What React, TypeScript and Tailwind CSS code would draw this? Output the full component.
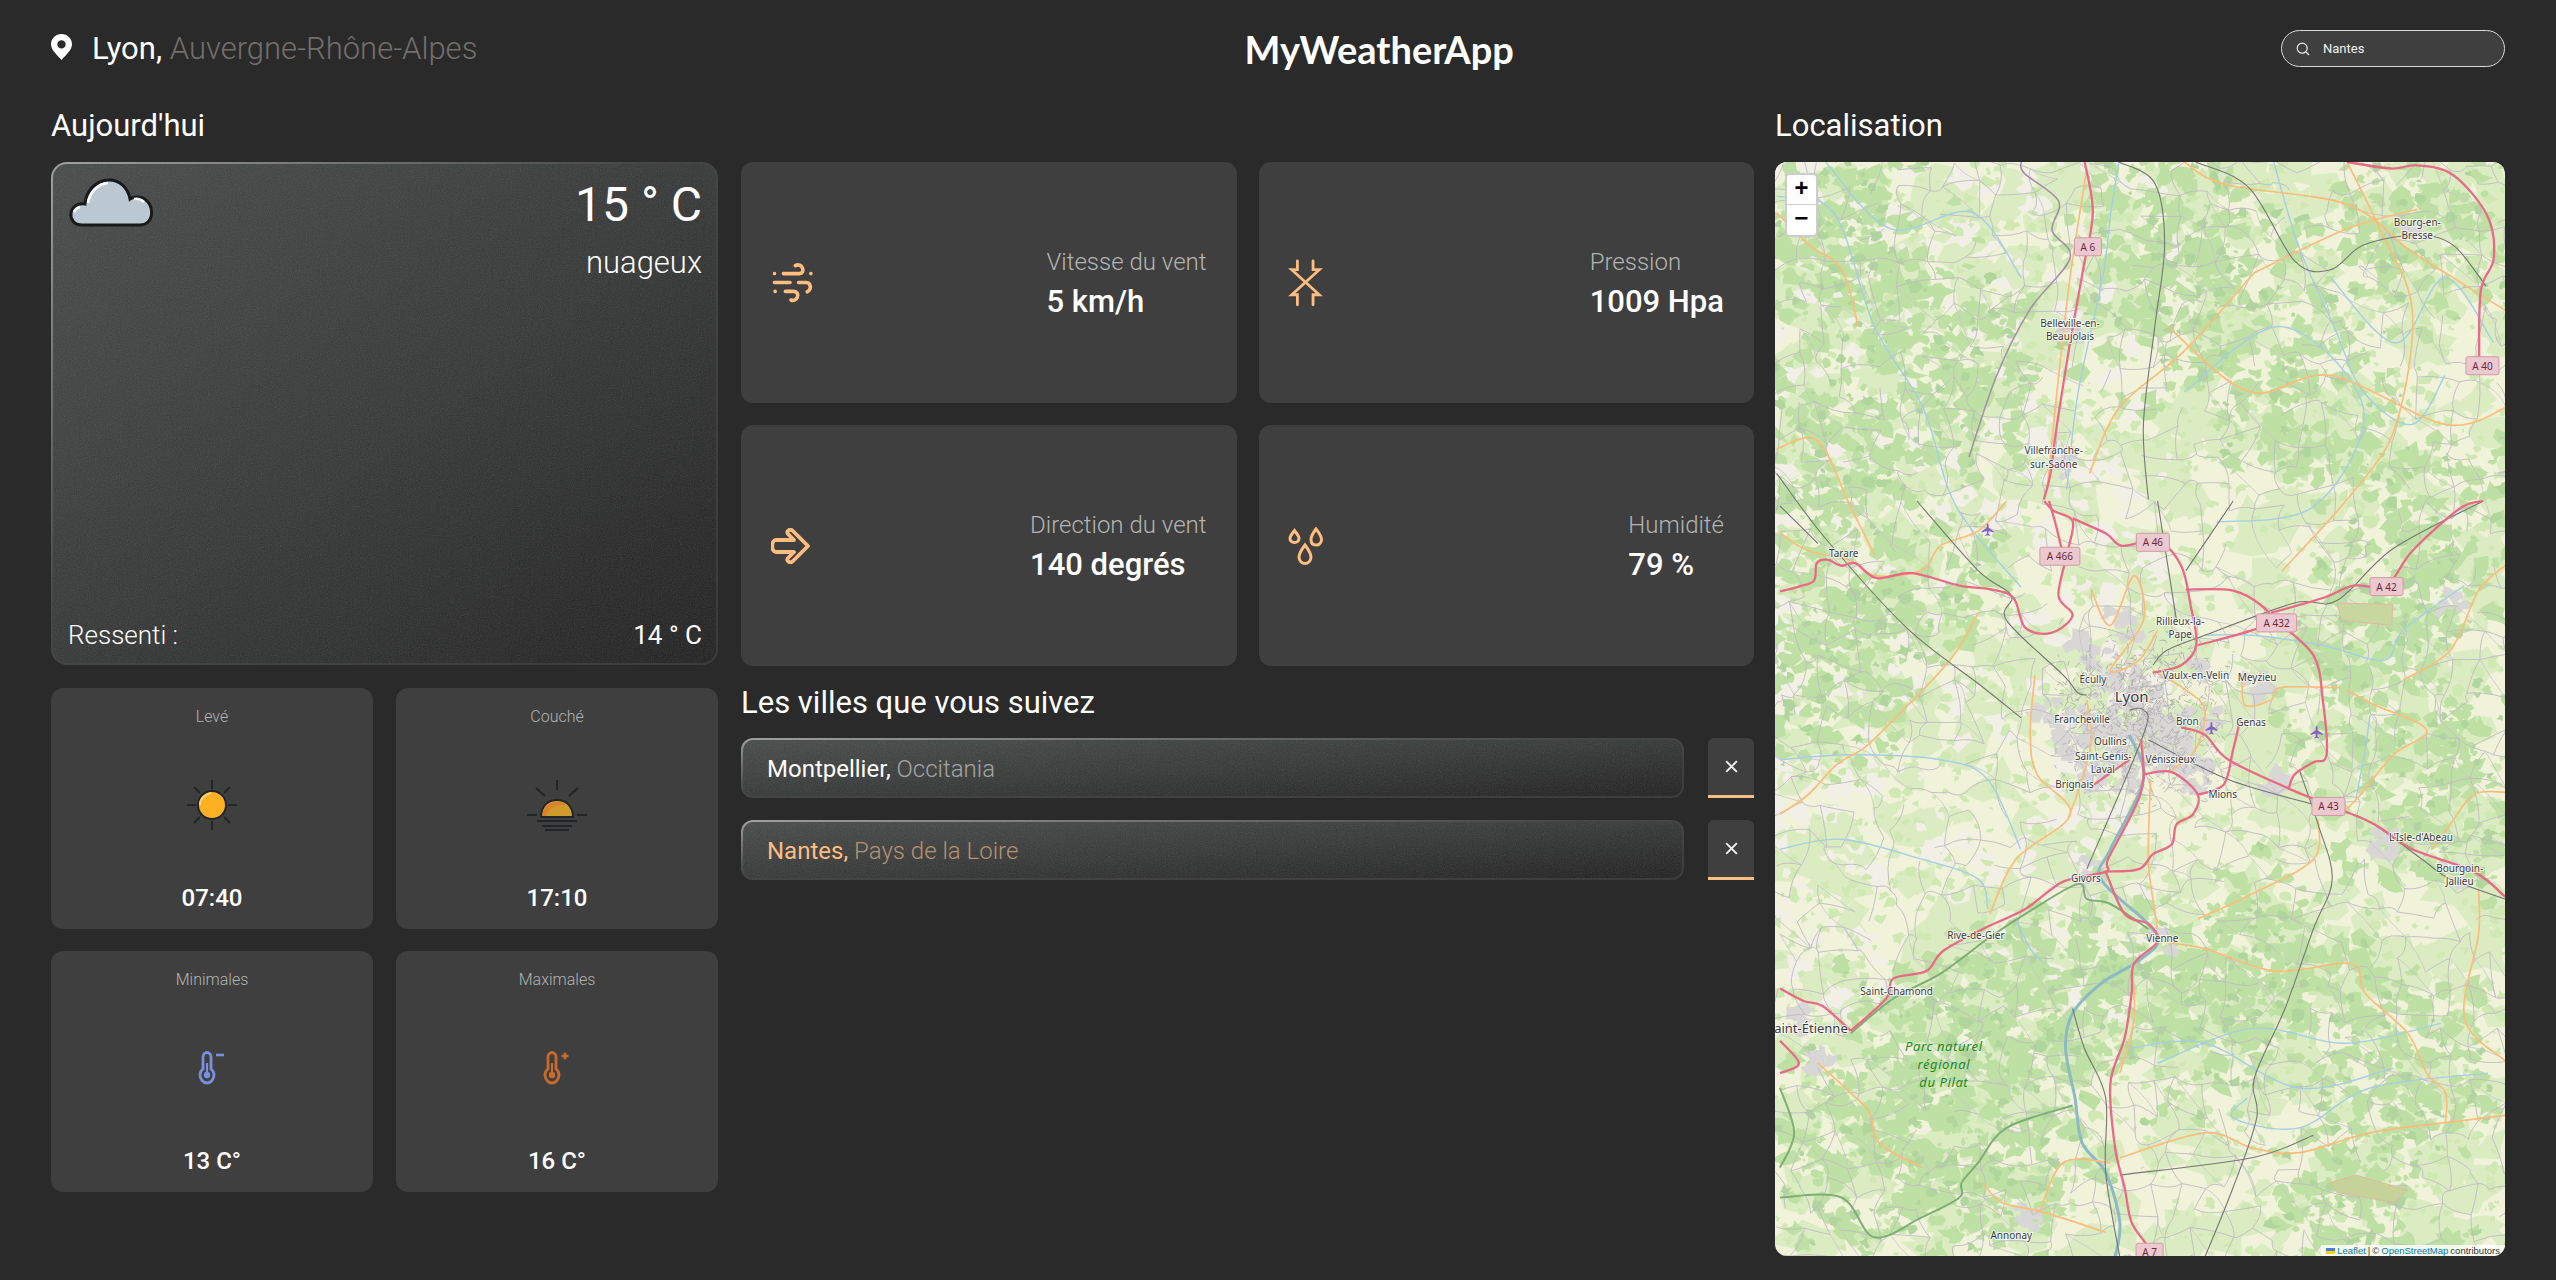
import React from 'react';

type Pt = [number, number];

// map coordinates were read off two crops, so there are two little converters
const Z = (x: number, y: number): Pt => [5 + x * 0.472, 339 + y * 0.4975];
const S = (x: number, y: number): Pt => [(x - 1089) * 1.63, (y - 99) * 1.63];

function pairs(nums: number[], f: (x: number, y: number) => Pt): Pt[] {
  const out: Pt[] = [];
  for (let i = 0; i < nums.length; i += 2) out.push(f(nums[i], nums[i + 1]));
  return out;
}

function smooth(p: Pt[]): string {
  let d = `M${p[0][0].toFixed(1)} ${p[0][1].toFixed(1)}`;
  for (let i = 0; i < p.length - 1; i++) {
    const a = p[Math.max(i - 1, 0)];
    const b = p[i];
    const c = p[i + 1];
    const e = p[Math.min(i + 2, p.length - 1)];
    d += `C${(b[0] + (c[0] - a[0]) / 6).toFixed(1)} ${(b[1] + (c[1] - a[1]) / 6).toFixed(1)} ${(c[0] - (e[0] - b[0]) / 6).toFixed(1)} ${(c[1] - (e[1] - b[1]) / 6).toFixed(1)} ${c[0].toFixed(1)} ${c[1].toFixed(1)}`;
  }
  return d;
}

const motorways = [
  pairs([0,182,40,172,72,160,78,125,100,118,130,130,160,125,205,155,280,145,380,170,450,178,495,195,520,255,575,265,620,230,590,190,610,100,620,40,580,20,560,0], Z),
  pairs([570,0,585,50,600,110], Z),
  pairs([620,35,690,65,725,90,800,80,850,130,870,210,882,290,850,330,790,345], Z),
  pairs([860,178,960,180,1020,210,1040,240,1000,260,885,290], Z),
  pairs([1040,225,1150,195,1215,170,1285,170,1340,100,1440,15,1490,0], Z),
  pairs([1050,240,1130,310,1150,400,1158,510,1130,525,1090,550,1078,578], Z),
  pairs([850,455,900,470,950,520,1078,578,1160,610,1260,650,1340,700,1470,745,1536,795], Z),
  pairs([740,520,665,570], Z),
  pairs([765,480,770,560,750,620,695,720,690,745,600,765,520,820,430,860,345,905,310,945,240,960,225,1000,150,1065], Z),
  pairs([690,745,730,830,780,850,800,885,750,930,745,990,730,1080,700,1170,710,1300,730,1380,745,1450,780,1500,780,1520], Z),
  pairs([770,550,830,545,885,590,875,630,840,650,830,690,790,710,760,740,690,745], Z),
  pairs([885,590,940,570,960,500,975,440], Z),
  pairs([0,980,50,1005,90,1015,150,1065], Z),
  pairs([0,1085,40,1130,0,1150], Z),
  pairs([1279,99,1284,130,1278,165,1270,210,1262,260,1258,290,1254,306], S),
  pairs([1440,99,1467,103,1483,101,1505,107,1526,132,1530,158,1522,178,1521,222], S),
];

const primaries = [
  pairs([420,225,360,320,240,440,180,495,120,530,60,590,0,630], Z),
  pairs([540,350,530,470,545,550,615,630,500,720,445,830], Z),
  pairs([785,560,780,720,790,800,800,860], Z),
  pairs([885,840,1000,790,1130,720,1140,640], Z),
  pairs([800,885,900,900,1050,945,1210,930,1240,990,1330,1070,1370,1150,1410,1190,1410,1250], Z),
  pairs([1480,780,1480,870,1450,1040,1536,1125], Z),
  pairs([720,1150,750,1040,745,930], Z),
  pairs([720,1320,900,1270,1000,1300,1100,1310,1250,1270,1450,1245,1536,1235], Z),
  pairs([1186,375,1060,375,1040,400,985,410,980,350], Z),
  pairs([1320,360,1420,300,1480,180,1536,130], Z),
  pairs([1200,380,1260,410,1370,460,1300,510,1230,590,1200,620], Z),
  pairs([1536,585,1470,590,1420,650,1380,700], Z),
  pairs([700,1330,600,1330,550,1430], Z),
  pairs([430,1370,470,1410,560,1430,690,1470], Z),
  pairs([80,1130,150,1190,190,1230,210,1290,300,1340], Z),
  pairs([0,65,60,100,150,120,200,150,300,140,340,90,420,60,480,0], Z),
  pairs([660,180,700,250,750,150,770,240,700,340,760,320,800,260], Z),
  pairs([650,400,660,480,640,560,610,640], Z),
  pairs([790,340,860,380,900,420,880,500,830,540], Z),
  pairs([1280,105,1270,170,1262,240,1256,300], S),
  pairs([1383,167,1340,215,1300,250,1282,290], S),
  pairs([1340,99,1366,113,1440,125,1478,153,1505,170,1537,190], S),
  pairs([1383,167,1440,140,1483,128], S),
  pairs([1090,275,1115,270,1135,310,1150,340], S),
  pairs([1440,99,1460,140,1480,190,1470,260,1445,300,1400,350], S),
  pairs([1090,130,1110,150,1130,165,1140,200], S),
  pairs([1330,200,1380,240,1430,230,1500,260,1537,250], S),
];

const rails = [
  pairs([800,0,840,240], Z),
  pairs([960,0,860,140], Z),
  pairs([1490,0,1300,95,1180,200,1090,205,900,270,820,300,790,330], Z),
  pairs([780,480,950,560,1130,610,1240,640,1360,720,1420,760,1536,800], Z),
  pairs([1100,540,1140,650,1170,760,1130,860,1070,1020,1005,1160,1010,1240,960,1380,900,1520], Z),
  pairs([290,0,420,140,490,190,480,240,600,350,630,385,650,390], Z),
  pairs([650,740,770,470,770,420,740,420], Z),
  pairs([620,1020,645,1100,690,1200,690,1350,720,1520], Z),
  pairs([720,1355,1000,1320,1130,1275], Z),
  pairs([0,10,80,85], Z),
  pairs([1300,99,1322,112,1328,150,1322,200,1315,260,1318,306], S),
  pairs([1347,99,1380,115,1408,160,1430,165,1450,150,1482,144,1505,150,1525,175], S),
  pairs([1090,290,1120,330,1170,385,1215,420,1240,440], S),
];

const parkEdge = [
  pairs([150,1070,240,1000,340,950,440,880,520,830,630,770,650,800,700,810,780,860], Z),
  pairs([0,1180,30,1270,0,1340], Z),
  pairs([0,1400,130,1400,200,1480,300,1440,380,1400,385,1370,420,1330,480,1260,620,1215], Z),
];

const rivers = [
  pairs([1090,120,1125,130,1150,200,1180,250,1200,310,1240,360], S),
  pairs([1395,99,1410,150,1432,200,1450,240,1480,260,1500,230], S),
  pairs([1340,240,1400,200,1450,250,1420,310,1360,320], S),
  pairs([1300,99,1295,130,1290,170,1275,240,1268,300], S),
  pairs([0,520,150,510,340,520,440,560,510,700], Z),
  pairs([0,700,130,680,300,720,420,760,440,820], Z),
  pairs([500,840,530,900,560,930], Z),
  pairs([800,1130,1000,1060,1200,1090,1400,1050], Z),
  pairs([740,1100,900,1090,1100,1180,1300,1140], Z),
  pairs([900,270,1000,270,1150,290,1280,320,1320,260,1450,170], Z),
  pairs([990,1200,960,1240,1100,1260,1250,1180,1500,1150], Z),
  pairs([1220,600,1240,500,1250,430], Z),
  pairs([1120,99,1160,140,1210,130,1240,170], S),
  pairs([1430,170,1470,210,1500,170,1530,210], S),
];

const rhone = pairs([740,470,770,560,700,700,680,760,780,850,800,890,750,930,680,970,620,1030,605,1100,625,1200,640,1290,690,1350,720,1450,710,1520], Z);

// cheap seeded random so every render gives the same countryside
function makeRand(seed: number) {
  let s = seed;
  return () => {
    s = (s * 1664525 + 1013904223) % 4294967296;
    return s / 4294967296;
  };
}

function blob(r: () => number, cx: number, cy: number, size: number): string {
  const n = 6 + Math.floor(r() * 5);
  let d = '';
  for (let i = 0; i < n; i++) {
    const a = (i / n) * Math.PI * 2;
    const q = size * (0.3 + r() * 1);
    d += `${i ? 'L' : 'M'}${(cx + Math.cos(a) * q).toFixed(1)} ${(cy + Math.sin(a) * q * 0.85).toFixed(1)}`;
  }
  return d + 'Z';
}

const forestCentres: Pt[] = [
  [90, 130], [190, 210], [40, 300], [120, 430], [60, 520], [150, 900], [230, 860], [90, 1000], [220, 1020], [500, 790],
  [620, 900], [590, 1040], [430, 850], [660, 640], [540, 240], [660, 370], [640, 60], [420, 150], [380, 60], [320, 820], [600, 500], [30, 60],
];

function countryside() {
  const r = makeRand(71);
  let wash = '';
  let light = '';
  let mid = '';
  let dark = '';
  let urban = '';
  let bare = '';
  for (let i = 0; i < 700; i++) {
    wash += blob(r, r() * 730, r() * 1094, 12 + r() * 24);
  }
  for (let i = 0; i < 350; i++) {
    bare += blob(r, r() * 400, r() * 860, 5 + r() * 12);
  }
  for (let i = 0; i < 2200; i++) {
    light += blob(r, r() * 730, r() * 1094, 2 + r() * 6);
  }
  for (const [cx, cy] of forestCentres) {
    for (let i = 0; i < 130; i++) {
      const x = cx + (r() + r() - 1) * 120;
      const y = cy + (r() + r() - 1) * 120;
      mid += blob(r, x, y, 3 + r() * 11);
      if (i % 4 === 0) dark += blob(r, x + (r() - 0.5) * 30, y + (r() - 0.5) * 30, 2 + r() * 6);
    }
  }
  const towns: Pt[] = [Z(745,400), Z(800,470), Z(690,330), Z(860,480), Z(650,470), Z(700,520), Z(880,560), Z(1010,370), Z(880,340), Z(1050,560), Z(560,420), Z(40,1040), Z(650,740), Z(810,880), Z(1280,690), Z(1430,750), Z(1420,200), Z(530,1440), S(1483,140), S(1270,285), S(1268,205), Z(90,1120), Z(720,240)];
  towns.forEach(([cx, cy], t) => {
    const count = t < 6 ? 34 : 10;
    const spread = t < 6 ? 62 : 24;
    for (let i = 0; i < count; i++) {
      urban += blob(r, cx + (r() - 0.5) * spread, cy + (r() - 0.5) * spread, 3 + r() * 8);
    }
  });
  // thin grey road mesh on a jittered grid
  const cell = 25;
  const cols = 31;
  const rows = 46;
  const nodes: Pt[] = [];
  for (let j = 0; j < rows; j++) {
    for (let i = 0; i < cols; i++) {
      nodes.push([i * cell + (r() - 0.5) * 22, j * cell + (r() - 0.5) * 22]);
    }
  }
  let mesh = '';
  let mesh2 = '';
  const edge = (a: Pt, b: Pt) => {
    const mx = (a[0] + b[0]) / 2 + (r() - 0.5) * 14;
    const my = (a[1] + b[1]) / 2 + (r() - 0.5) * 14;
    return `M${a[0].toFixed(1)} ${a[1].toFixed(1)}Q${mx.toFixed(1)} ${my.toFixed(1)} ${b[0].toFixed(1)} ${b[1].toFixed(1)}`;
  };
  for (let j = 0; j < rows; j++) {
    for (let i = 0; i < cols; i++) {
      const n = nodes[j * cols + i];
      if (i < cols - 1 && r() < 0.62) mesh += edge(n, nodes[j * cols + i + 1]);
      if (j < rows - 1 && r() < 0.62) mesh += edge(n, nodes[(j + 1) * cols + i]);
      if (i < cols - 1 && j < rows - 1 && r() < 0.22) mesh2 += edge(n, nodes[(j + 1) * cols + i + 1]);
    }
  }
  // streets around the big towns
  let streets = '';
  const [lx, ly] = Z(760, 430);
  for (let i = 0; i < 900; i++) {
    const x = lx + (r() + r() - 1) * 95;
    const y = ly + (r() + r() - 1) * 95;
    streets += `M${x.toFixed(1)} ${y.toFixed(1)}L${(x + (r() - 0.5) * 12).toFixed(1)} ${(y + (r() - 0.5) * 12).toFixed(1)}`;
  }
  return { wash, light, mid, dark, urban, bare, mesh, mesh2, streets };
}

const land = countryside();

const places: { at: Pt; t: string; size?: number }[] = [
  { at: Z(135,113), t: 'Tarare' },
  { at: Z(663,365), t: 'Écully' },
  { at: Z(745,404), t: 'Lyon', size: 15 },
  { at: Z(640,446), t: 'Francheville' },
  { at: Z(700,490), t: 'Oullins' },
  { at: Z(685,521), t: 'Saint-Genis-' },
  { at: Z(684,546), t: 'Laval' },
  { at: Z(624,577), t: 'Brignais' },
  { at: Z(827,527), t: 'Vénissieux' },
  { at: Z(863,451), t: 'Bron' },
  { at: Z(998,453), t: 'Genas' },
  { at: Z(938,597), t: 'Mions' },
  { at: Z(1011,362), t: 'Meyzieu' },
  { at: Z(881,357), t: 'Vaulx-en-Velin' },
  { at: Z(848,250), t: 'Rillieux-la-' },
  { at: Z(848,275), t: 'Pape' },
  { at: Z(1358,683), t: "L'Isle-d'Abeau" },
  { at: Z(1440,746), t: 'Bourgoin-' },
  { at: Z(1440,771), t: 'Jallieu' },
  { at: Z(648,765), t: 'Givors' },
  { at: Z(810,887), t: 'Vienne' },
  { at: Z(415,880), t: 'Rive-de-Gier' },
  { at: Z(247,993), t: 'Saint-Chamond' },
  { at: Z(58,1069), t: 'Saint-Étienne', size: 13 },
  { at: Z(490,1483), t: 'Annonay' },
  { at: S(1483,138), t: 'Bourg-en-' },
  { at: S(1483,146), t: 'Bresse' },
  { at: S(1270,200), t: 'Belleville-en-' },
  { at: S(1270,208), t: 'Beaujolais' },
  { at: S(1260,278), t: 'Villefranche-' },
  { at: S(1260,287), t: 'sur-Saône' },
];

const shields: { at: Pt; t: string; w: number }[] = [
  { at: Z(593,111), t: 'A 466', w: 40 },
  { at: Z(790,83), t: 'A 46', w: 33 },
  { at: Z(1285,172), t: 'A 42', w: 33 },
  { at: Z(1052,245), t: 'A 432', w: 40 },
  { at: Z(1162,614), t: 'A 43', w: 33 },
  { at: Z(783,1510), t: 'A 7', w: 27 },
  { at: S(1281,151), t: 'A 6', w: 27 },
  { at: S(1523,224), t: 'A 40', w: 33 },
];

const planes: Pt[] = [Z(440,58), Z(914,457), Z(1137,465)];

function MapDrawing() {
  return (
    <svg viewBox="0 0 730 1094" width="730" height="1094" className="block">
      <rect width="730" height="1094" fill="#f0f2da" />
      <path d={land.wash} fill="#dcecc2" />
      <path d={land.bare} fill="#f1efe6" />
      <path d={land.light} fill="#d0e8b4" />
      <path d={land.mid} fill="#bfe0a4" />
      <path d={land.dark} fill="#b0d69d" />
      <path d={land.urban} fill="#d8d7d6" />
      <path d={land.streets} fill="none" stroke="#aeacae" strokeWidth="0.8" />
      <path d={land.mesh} fill="none" stroke="#bfbbc3" strokeWidth="0.9" />
      <path d={land.mesh2} fill="none" stroke="#c8c5ca" strokeWidth="0.8" />
      {rivers.map((p, i) => (
        <path key={i} d={smooth(p)} fill="none" stroke="#a5cfe3" strokeWidth="1.4" />
      ))}
      <path d={smooth(rhone)} fill="none" stroke="#8bb9c4" strokeWidth="3" />
      {parkEdge.map((p, i) => (
        <path key={i} d={smooth(p)} fill="none" stroke="#7fae74" strokeWidth="2" />
      ))}
      <path d={smooth(pairs([1240,99,1242,106,1263,123,1259,141,1270,158,1245,190,1225,230,1208,280], S))} fill="none" stroke="#a78fa9" strokeWidth="1.6" />
      {primaries.map((p, i) => (
        <path key={i} d={smooth(p)} fill="none" stroke="#fbbd79" strokeWidth="1.7" />
      ))}
      {rails.map((p, i) => (
        <path key={i} d={smooth(p)} fill="none" stroke="#767676" strokeWidth="1.1" />
      ))}
      {motorways.map((p, i) => (
        <path key={i} d={smooth(p)} fill="none" stroke="#ea6a85" strokeWidth="2.3" />
      ))}
      <polygon points={`${Z(1180,205).join(',')} ${Z(1298,208).join(',')} ${Z(1296,250).join(',')} ${Z(1190,240).join(',')}`} fill="#c8d6a0" stroke="#e0b9a0" />
      <polygon points={`${Z(1165,1370).join(',')} ${Z(1220,1355).join(',')} ${Z(1330,1385).join(',')} ${Z(1300,1410).join(',')} ${Z(1180,1390).join(',')}`} fill="#c5d29a" stroke="#e0b9a0" />
      {planes.map(([x, y], i) => (
        <path key={i} transform={`translate(${x} ${y})`} d="M-0.8 -6L0.8 -6L1 -2L6 1.4L6 2.6L1 1.2L0.8 4L2.4 5.4L2.4 6.2L0 5.4L-2.4 6.2L-2.4 5.4L-0.8 4L-1 1.2L-6 2.6L-6 1.4L-1 -2Z" fill="#8461c4" />
      ))}
      {places.map((p) => (
        <text
          key={p.t}
          x={p.at[0]}
          y={p.at[1]}
          textAnchor="middle"
          fontSize={p.size ?? 10}
          fill="#3b3b3b"
          stroke="#ffffff"
          strokeOpacity="0.75"
          strokeWidth="2"
          paintOrder="stroke"
          className="font-['Noto_Sans',sans-serif]"
        >
          {p.t}
        </text>
      ))}
      {['Parc naturel', 'régional', 'du Pilat'].map((t, i) => (
        <text
          key={t}
          x={Z(347, 0)[0]}
          y={Z(0, 1106 + i * 36)[1]}
          textAnchor="middle"
          fontSize="13"
          fontStyle="italic"
          letterSpacing="0.6"
          fill="#1e8a1e"
          className="font-['Noto_Sans',sans-serif]"
        >
          {t}
        </text>
      ))}
      {shields.map((s) => (
        <g key={s.t} transform={`translate(${s.at[0]} ${s.at[1]})`}>
          <rect x={-s.w / 2} y={-9} width={s.w} height={18} rx="2" fill="#ecc9d0" stroke="#d49aa6" strokeWidth="1" />
          <text y="4" textAnchor="middle" fontSize="10" fill="#70283c" className="font-['Noto_Sans',sans-serif]">
            {s.t}
          </text>
        </g>
      ))}
    </svg>
  );
}

function Noise({ opacity = 0.17 }: { opacity?: number }) {
  return (
    <svg className="absolute inset-0 h-full w-full pointer-events-none" style={{ opacity }}>
      <rect width="100%" height="100%" filter="url(#grain)" />
    </svg>
  );
}

function Glass({ className, inner, children }: { className: string; inner: string; children: React.ReactNode }) {
  return (
    <div className={`p-[2px] bg-linear-to-br from-[#a0a1a0] via-[#454645] via-45% to-[#3c3c3c] ${className}`}>
      <div className={`relative h-full overflow-hidden bg-linear-to-br from-[#474948] via-[#343535] to-[#1f1f1f] ${inner}`}>
        <Noise />
        {children}
      </div>
    </div>
  );
}

function CloudIcon() {
  return (
    <svg width="86" height="52" viewBox="0 0 86 52">
      <path
        d="M14 48C6 48 2 42 3 36C4 30 9 26 17 27C18 14 28 3 41 3C52 3 60 11 62 22C66 19 74 19 79 24C85 30 85 40 80 45C78 47 76 48 72 48Z"
        fill="#bcc8d1"
        stroke="#17191b"
        strokeWidth="3"
      />
      <path d="M20 26C22 15 30 7 40 6M6 35C7 33 9 31 12 30M66 22C70 21 74 23 76 25" fill="none" stroke="#fafcfd" strokeWidth="2.5" />
    </svg>
  );
}

function SunIcon() {
  return (
    <svg width="52" height="52" viewBox="0 0 52 52" fill="none">
      <path d="M26 1V10M26 42V51M1 26H10M42 26H51M8 8L14 14M38 38L44 44M8 44L14 38M38 14L44 8" stroke="#212527" strokeWidth="2" />
      <circle cx="26" cy="26" r="14" fill="#fbb122" stroke="#212527" strokeWidth="2" />
      <path d="M14 26C14 20 19 15 25 14" stroke="#fbd27a" strokeWidth="2" />
    </svg>
  );
}

function SunsetIcon() {
  return (
    <svg width="62" height="52" viewBox="0 0 62 52" fill="none">
      <path d="M31 1V11M10 9L19 17M52 9L43 17M1 36H11M51 36H61M11 42H51M16 47H46M19 51H43" stroke="#212527" strokeWidth="2" />
      <path d="M15 38C15 27 22 21 31 21C40 21 47 27 47 38Z" fill="#cf9b2b" stroke="#212527" strokeWidth="2" />
      <path d="M17 37C17 29 23 23 31 23C35 23 38 24 40 26C30 25 23 30 20 37Z" fill="#dd7f2c" />
    </svg>
  );
}

function ThermoIcon({ color, plus }: { color: string; plus?: boolean }) {
  return (
    <svg width="28" height="34" viewBox="0 0 28 34" fill="none">
      <path d="M5 18V6C5 3 7 1.5 9 1.5C11 1.5 13 3 13 6V18C15 19.5 16 21.5 16 24C16 28 13 32 9 32C5 32 2 28 2 24C2 21.5 3 19.5 5 18Z" stroke={color} strokeWidth="2.8" />
      <path d="M9 12V24" stroke={color} strokeWidth="2.2" />
      <circle cx="9" cy="24" r="3.2" fill={color} />
      {plus ? <path d="M22 1.5V8.5M18.5 5H25.5" stroke={color} strokeWidth="2.6" /> : <path d="M18 4H26" stroke={color} strokeWidth="2.6" />}
    </svg>
  );
}

function WindIcon() {
  return (
    <svg width="45" height="43" viewBox="60 60 135 130" fill="none" stroke="#ffbd80" strokeWidth="11" strokeLinecap="round">
      <path d="M73 98H73.1M183 98H183.1M75 152H75.1" />
      <path d="M100 98H148C158 98 161 90 158 82C155 73 145 69 136 74" />
      <path d="M73 125H120M146 125H168C180 125 184 137 180 145C178 150 175 152 172 153" />
      <path d="M106 152H130C142 152 146 162 142 170C139 178 130 181 123 178" />
    </svg>
  );
}

function PressureIcon() {
  return (
    <svg width="36" height="52" viewBox="50 50 115 155" fill="none" stroke="#ffbd80" strokeWidth="9" strokeLinecap="round" strokeLinejoin="miter">
      <path d="M80 57V85H62L150 165H130V197" />
      <path d="M130 57V85H150L62 165H80V197" />
    </svg>
  );
}

function ArrowIcon() {
  return (
    <svg width="40" height="36" viewBox="0 0 40 36" fill="none" stroke="#ffbd80" strokeWidth="3.8" strokeLinejoin="round" className="ml-[1px]">
      <path d="M5 12H23L17 6C15 3 19 0 22 3L37 18L22 33C19 36 15 33 17 30L23 24H5C0 24 0 12 5 12Z" />
    </svg>
  );
}

function DropsIcon() {
  return (
    <svg width="36" height="38" viewBox="0 0 36 38" fill="none" stroke="#ffbd80" strokeWidth="3">
      <path d="M6.5 3.5C4 7 2 9 2 11.5C2 14 4 15.5 6.5 15.5C9 15.5 11 14 11 11.5C11 9 9 7 6.5 3.5Z" />
      <path d="M28 2C25 6 23 9 23 12.5C23 16 25 18 28 18C31 18 33.5 16 33.5 12.5C33.5 9 31 6 28 2Z" />
      <path d="M17 18C14 22 11 26 11 30C11 34 14 36.5 17 36.5C20 36.5 23 34 23 30C23 26 20 22 17 18Z" />
    </svg>
  );
}

function StatCard({ icon, label, value }: { icon: React.ReactNode; label: string; value: string }) {
  return (
    <div className="flex items-center justify-between rounded-xl bg-[#3e3f3e] pl-[29px] pr-[30px]">
      <div className="flex w-[50px] items-center">{icon}</div>
      <div>
        <div className="text-[24px] leading-[34px] font-light text-[#b4b4b4]">{label}</div>
        <div className="mt-[4px] text-[31px] leading-[38px] font-medium text-white">{value}</div>
      </div>
    </div>
  );
}

function SmallCard({ label, icon, value }: { label: string; icon: React.ReactNode; value: string }) {
  return (
    <div className="flex flex-col items-center justify-between rounded-xl bg-[#3e3f3e] pt-[18px] pb-[15px]">
      <div className="text-[16px] leading-[22px] font-light text-[#b4b4b4]">{label}</div>
      <div className="flex h-[60px] items-center justify-center">{icon}</div>
      <div className="text-[24px] leading-[32px] font-medium text-white">{value}</div>
    </div>
  );
}

function CityRow({ name, region, active }: { name: string; region: string; active?: boolean }) {
  return (
    <div className="flex h-[60px] gap-6">
      <Glass className="flex-1 rounded-xl" inner="rounded-[10px]">
        <div className="relative flex h-full items-center pt-[1px] pl-[24px] text-[24px] leading-none">
          <span className={`font-normal ${active ? 'text-[#ffbd80]' : 'text-white'}`}>{name},&nbsp;</span>
          <span className={`font-light ${active ? 'text-[#b59273]' : 'text-[#a3a5a5]'}`}>{region}</span>
        </div>
      </Glass>
      <button className="flex w-[46px] items-center justify-center rounded-t-md border-b-[3px] border-[#ffbd80] bg-[#3e3f3e]">
        <svg width="15" height="15" viewBox="0 0 14 14" stroke="#f2f2f2" strokeWidth="1.8">
          <path d="M2 2L12 12M12 2L2 12" />
        </svg>
      </button>
    </div>
  );
}

export default function App() {
  return (
    <div className="h-[1280px] w-full overflow-hidden bg-[#292a29] pr-[51px] pl-[51px] font-['Roboto',sans-serif] text-white">
      <svg width="0" height="0" className="absolute">
        <filter id="grain">
          <feTurbulence type="fractalNoise" baseFrequency="0.9" numOctaves="2" stitchTiles="stitch" />
          <feColorMatrix type="saturate" values="0" />
        </filter>
      </svg>

      <header className="flex h-[97px] items-center justify-between">
        <div className="flex items-center gap-[20px]">
          <svg width="21" height="26" viewBox="0 0 21 26" className="mb-[3px]">
            <path fillRule="evenodd" d="M10.5 0C16.3 0 21 4.6 21 10.3C21 16 15 21 10.5 26C6 21 0 16 0 10.3C0 4.6 4.7 0 10.5 0ZM10.5 6.2A4.2 4.2 0 1 0 10.5 14.6A4.2 4.2 0 1 0 10.5 6.2Z" fill="#ffffff" />
          </svg>
          <div className="text-[31px] leading-none">
            <span className="font-normal text-white">Lyon, </span>
            <span className="font-light text-[#736f6d]">Auvergne-Rhône-Alpes</span>
          </div>
        </div>
        <div className="font-['Lato',sans-serif] text-[38px] leading-none font-bold text-white">MyWeatherApp</div>
        <div className="flex h-[37px] w-[224px] items-center gap-[13px] rounded-full border-[1.5px] border-[#d9d9d9] bg-[#3e3f3e] pl-[14px]">
          <svg width="14" height="14" viewBox="0 0 14 14" fill="none" stroke="#eeeeee" strokeWidth="1.2">
            <circle cx="6.2" cy="6.2" r="5" />
            <path d="M10 10L13 13" />
          </svg>
          <span className="text-[13px] leading-none text-[#f2f2f2]">Nantes</span>
        </div>
      </header>

      <main className="flex">
        <section className="w-[667px] shrink-0">
          <h2 className="h-[65px] text-[31px] leading-[57px] font-normal">Aujourd'hui</h2>
          <Glass className="h-[503px] rounded-2xl" inner="rounded-[14px]">
            <div className="relative flex h-full flex-col justify-between pt-[13px] pr-[14px] pb-[10px] pl-[15px]">
              <div className="flex items-start justify-between">
                <CloudIcon />
                <div className="text-right">
                  <div className="text-[48px] leading-[56px] font-normal">15 ° C</div>
                  <div className="mt-[10px] text-[31px] leading-[40px] font-light">nuageux</div>
                </div>
              </div>
              <div className="flex items-center justify-between text-[26px] leading-[36px]">
                <span className="font-light">Ressenti :</span>
                <span className="font-normal">14 ° C</span>
              </div>
            </div>
          </Glass>
          <div className="mt-[23px] grid grid-cols-2 gap-x-[23px] gap-y-[22px] [grid-auto-rows:241px]">
            <SmallCard label="Levé" icon={<SunIcon />} value="07:40" />
            <SmallCard label="Couché" icon={<SunsetIcon />} value="17:10" />
            <SmallCard label="Minimales" icon={<ThermoIcon color="#7a90de" />} value="13 C°" />
            <SmallCard label="Maximales" icon={<ThermoIcon color="#c96a28" plus />} value="16 C°" />
          </div>
        </section>

        <section className="ml-[23px] w-[1013px] shrink-0 pt-[65px]">
          <div className="grid grid-cols-2 gap-x-[22px] gap-y-[22px] [grid-auto-rows:241px]">
            <StatCard icon={<WindIcon />} label="Vitesse du vent" value="5 km/h" />
            <StatCard icon={<PressureIcon />} label="Pression" value="1009 Hpa" />
            <StatCard icon={<ArrowIcon />} label="Direction du vent" value="140 degrés" />
            <StatCard icon={<DropsIcon />} label="Humidité" value="79 %" />
          </div>
          <h2 className="h-[72px] text-[31px] leading-[74px] font-normal">Les villes que vous suivez</h2>
          <div className="flex flex-col gap-[22px]">
            <CityRow name="Montpellier" region="Occitania" />
            <CityRow name="Nantes" region="Pays de la Loire" active />
          </div>
        </section>

        <section className="ml-[21px] w-[730px] shrink-0">
          <h2 className="h-[65px] text-[31px] leading-[57px] font-normal">Localisation</h2>
          <div className="relative h-[1094px] overflow-hidden rounded-xl">
            <MapDrawing />
            <div className="absolute top-[11px] left-[10px] w-[33px] overflow-hidden rounded-[5px] border-2 border-[rgba(0,0,0,0.2)] bg-white font-['Liberation_Mono',monospace] text-black">
              <div className="flex h-[30px] items-center justify-center border-b border-[#cccccc] text-[24px] leading-none font-bold">+</div>
              <div className="flex h-[30px] items-center justify-center text-[24px] leading-none font-bold">−</div>
            </div>
            <div className="absolute right-0 bottom-0 flex h-[11px] items-center gap-[2px] bg-white/80 pr-[5px] pl-[5px] font-['Liberation_Sans',sans-serif] text-[9.5px] leading-none text-[#333333]">
              <svg width="9" height="6" viewBox="0 0 9 6">
                <rect width="9" height="3" fill="#4c7be1" />
                <rect y="3" width="9" height="3" fill="#ffd500" />
              </svg>
              <span className="text-[#0078a8]">Leaflet</span>
              <span>|</span>
              <span>©</span>
              <span className="text-[#0078a8]">OpenStreetMap</span>
              <span>contributors</span>
            </div>
          </div>
        </section>
      </main>
    </div>
  );
}
